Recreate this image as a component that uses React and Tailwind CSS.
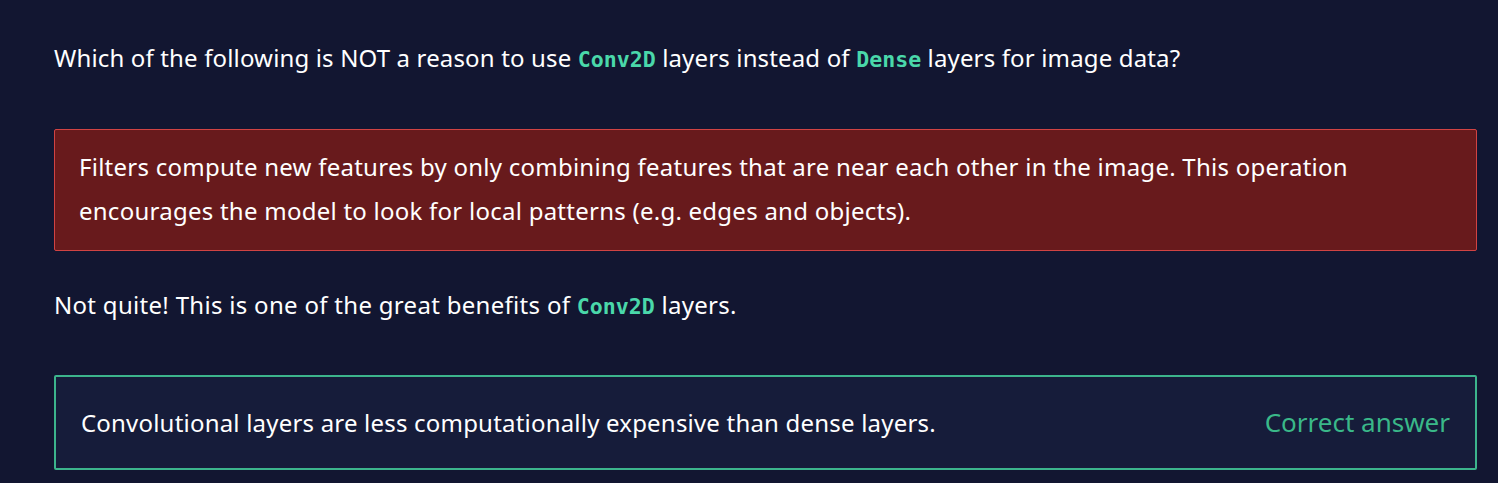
import React from "react";

const Code = ({ children }) => (
  <code className="font-['DejaVu_Sans_Mono',monospace] font-bold text-[21.6px] leading-none tracking-normal text-[#4ad8aa]">
    {children}
  </code>
);

function App() {
  return (
    <div className="bg-[#121631] w-[1498px] h-[483px] overflow-hidden font-['Noto_Sans',sans-serif] text-white">
      <div className="px-[54px] pr-[21px] pt-[40px]">
        {/* Question */}
        <p className="text-[24px] leading-[36px] tracking-[0.15px]">
          Which of the following is NOT a reason to use <Code>Conv2D</Code> layers instead of{" "}
          <Code>Dense</Code> layers for image data?
        </p>

        {/* Selected (wrong) answer */}
        <div className="mt-[53px] bg-[#681a1c] border border-[#d14343] rounded-[2px] pl-[24px] pr-[30px] pt-[15px] pb-[17px]">
          <p className="text-[24px] leading-[44px] tracking-[0.25px]">
            Filters compute new features by only combining features that are near each other in the image. This operation
            encourages the model to look for local patterns (e.g. edges and objects).
          </p>
        </div>

        {/* Feedback */}
        <p className="mt-[36px] text-[24px] leading-[36px] tracking-[0.3px]">
          Not quite! This is one of the great benefits of <Code>Conv2D</Code> layers.
        </p>

        {/* Correct answer */}
        <div className="mt-[52px] flex justify-between items-center bg-[#161c3a] border-2 border-[#3cb48c] rounded-[2px] h-[95px] pl-[25px] pr-[25px]">
          <span className="text-[24px] tracking-[0.2px]">
            Convolutional layers are less computationally expensive than dense layers.
          </span>
          <span className="text-[26px] text-[#3ab889]">Correct answer</span>
        </div>
      </div>
    </div>
  );
}

export default App;
